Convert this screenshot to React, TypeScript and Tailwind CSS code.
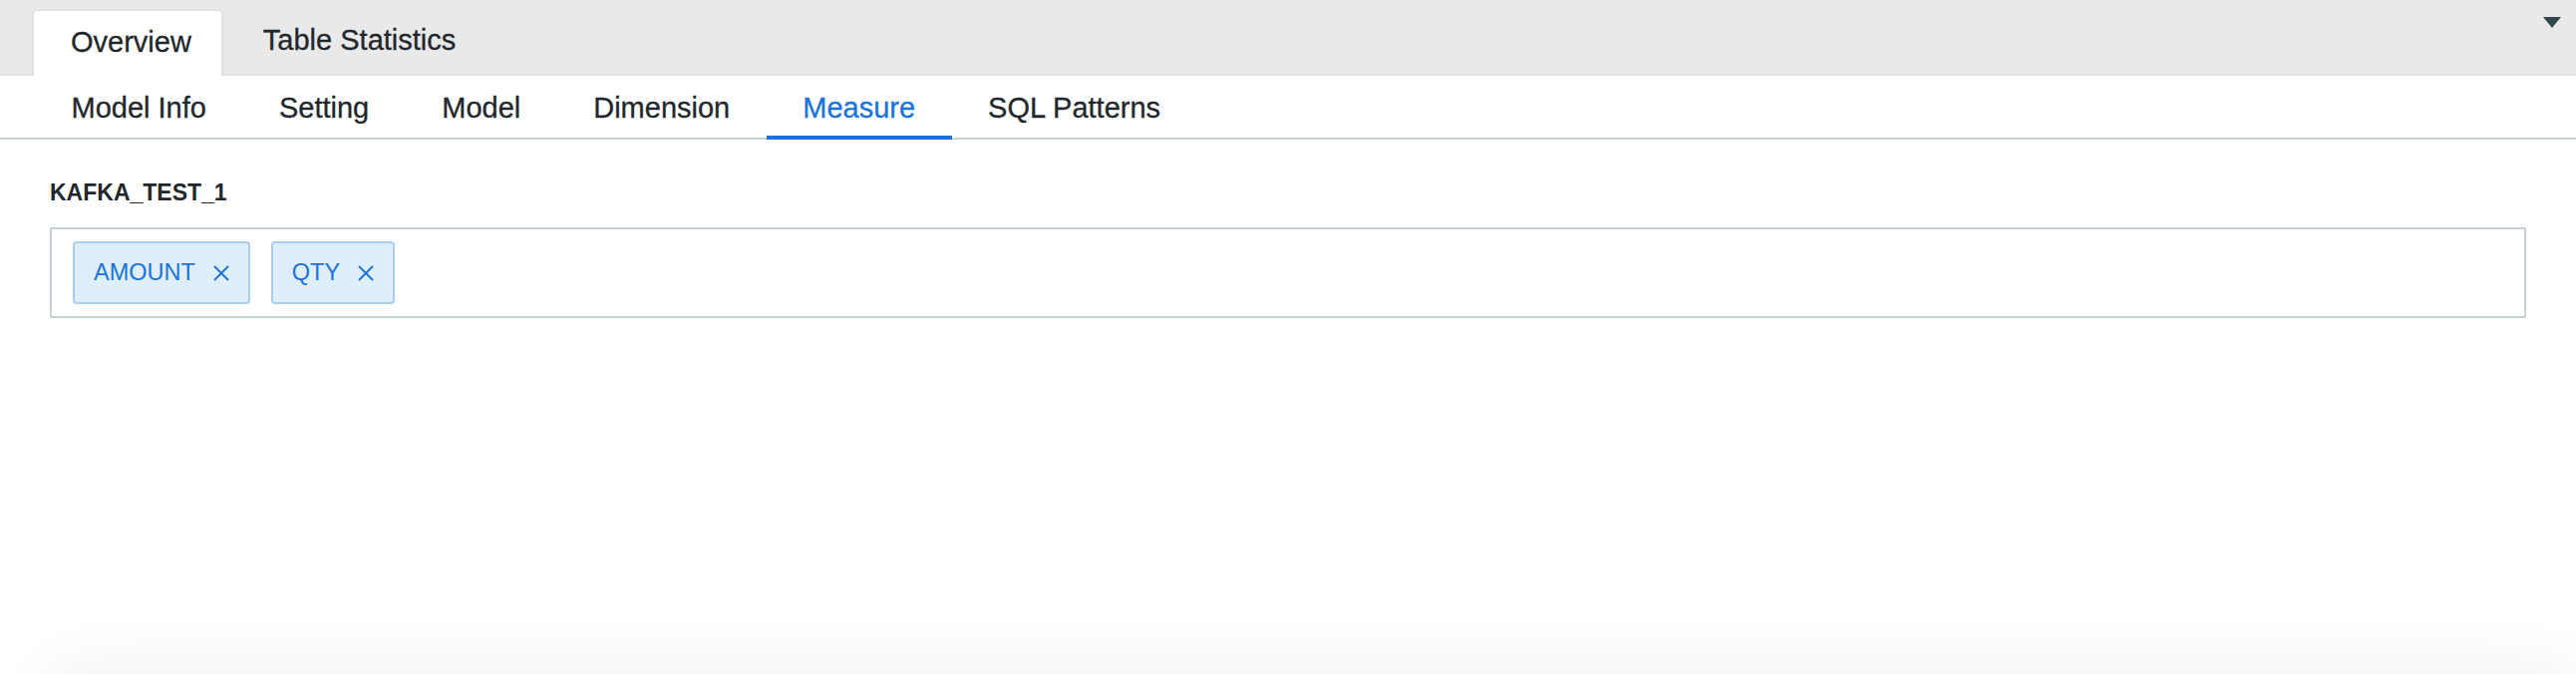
import React from "react";

const subTabs = ["Model Info", "Setting", "Model", "Dimension", "Measure", "SQL Patterns"];
const measures = ["AMOUNT", "QTY"];

export default function App() {
  return (
    <div className="min-h-screen bg-white font-['Liberation_Sans',Arial,sans-serif] text-[#1f272c]">
      {/* top tabs */}
      <div className="flex h-[76px] items-end border-b-2 border-[#dfe1e6] bg-[#e9e9e9] pl-[32px] pr-[15px]">
        <div className="-mb-[2px] flex h-[67px] items-center rounded-t-[6px] border-2 border-b-0 border-[#dfe1e6] bg-white pl-[37px] pr-[30px] pb-[2px] text-[29px] [-webkit-text-stroke:0.3px_currentColor]">
          Overview
        </div>
        <div className="flex h-[65px] items-center px-[40px] pb-[2px] text-[29px] [-webkit-text-stroke:0.3px_currentColor]">
          Table Statistics
        </div>
        <div className="ml-auto self-start pt-[17px]">
          <div className="h-0 w-0 border-x-[9px] border-t-[11px] border-x-transparent border-t-[#34474f]" />
        </div>
      </div>

      {/* sub tabs */}
      <div className="flex h-[64px] items-stretch border-b-2 border-[#c8d2d5] pl-[35px]">
        {subTabs.map((t) => {
          const active = t === "Measure";
          return (
            <div
              key={t}
              className={`-mb-[2px] flex items-center border-b-4 px-[36.5px] pt-[5px] text-[29px] [-webkit-text-stroke:0.3px_currentColor] ${
                active ? "border-[#1a73d9] text-[#1a73d9]" : "border-transparent text-[#1f272c]"
              }`}
            >
              {t}
            </div>
          );
        })}
      </div>

      {/* content */}
      <div className="px-[50px] pt-[38px]">
        <div className="text-[23px] font-bold leading-[30px]">KAFKA_TEST_1</div>
        <div className="mt-[20px] flex h-[91px] flex-wrap content-start gap-[21px] border-2 border-[#c8d2d5] px-[21px] pt-[12px]">
          {measures.map((m) => (
            <div
              key={m}
              className="flex h-[63px] items-center gap-[18px] rounded-[4px] border-2 border-[#a9cef0] bg-[#deeefa] px-[19px] text-[23.5px] text-[#1a73d9]"
            >
              <span>{m}</span>
              <svg width="16" height="16" viewBox="0 0 16 16" fill="none" stroke="#1a73d9" strokeWidth="1.8">
                <path d="M1 1 L15 15 M15 1 L1 15" />
              </svg>
            </div>
          ))}
        </div>
      </div>

      {/* card below the fold, only its shadow shows */}
      <div className="mt-[357px] ml-[50px] h-[300px] rounded-[30px] bg-white shadow-[0_0_70px_rgba(0,0,0,0.07)]" />
    </div>
  );
}
